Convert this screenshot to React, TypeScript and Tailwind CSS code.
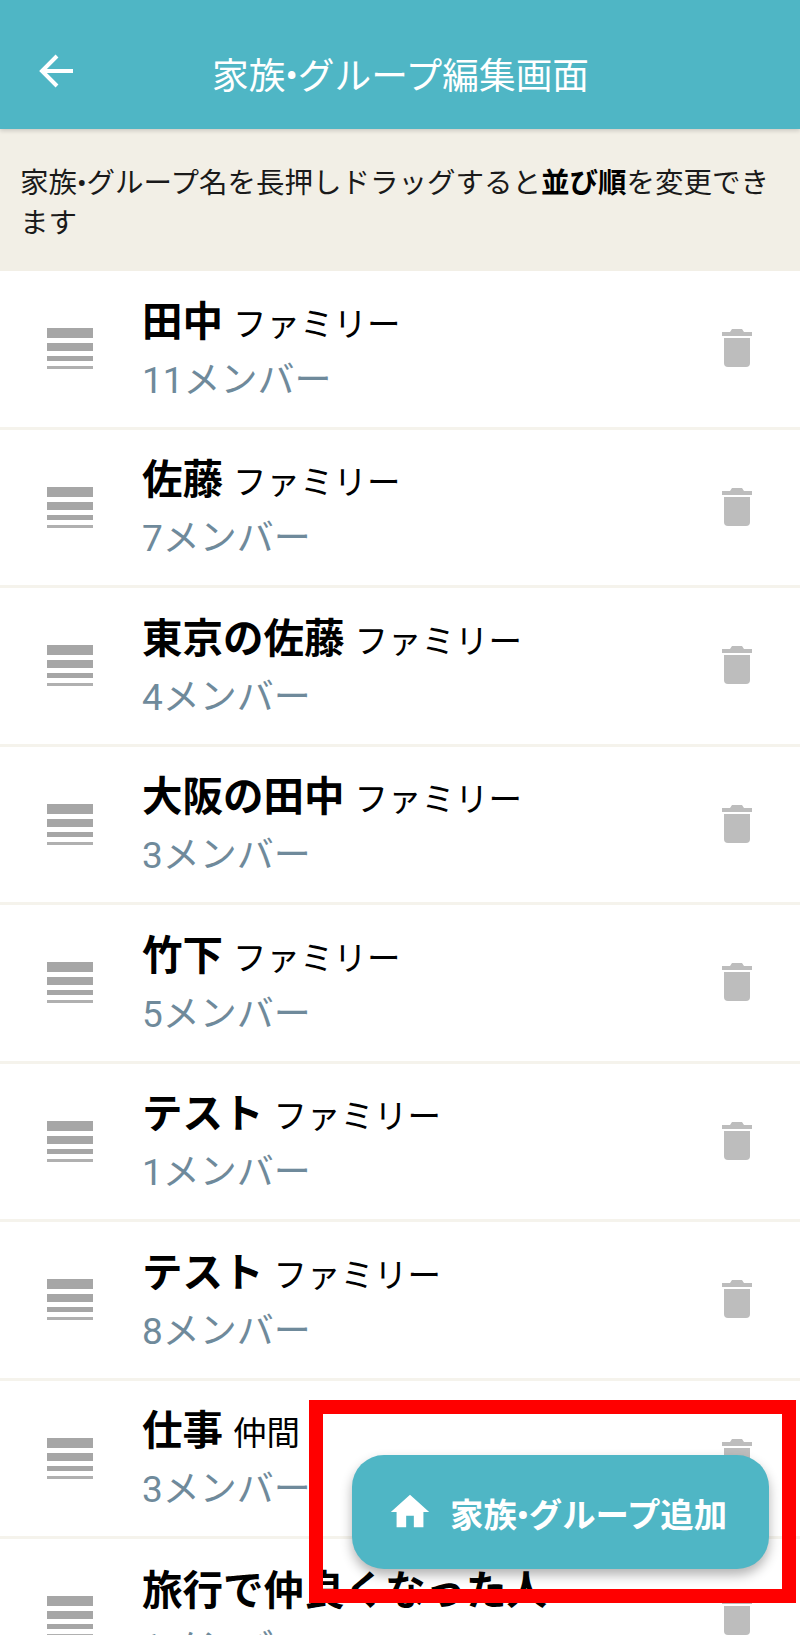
const rows = [
  { name: "田中", tag: "ファミリー", count: "11メンバー" },
  { name: "佐藤", tag: "ファミリー", count: "7メンバー" },
  { name: "東京の佐藤", tag: "ファミリー", count: "4メンバー" },
  { name: "大阪の田中", tag: "ファミリー", count: "3メンバー" },
  { name: "竹下", tag: "ファミリー", count: "5メンバー" },
  { name: "テスト", tag: "ファミリー", count: "1メンバー" },
  { name: "テスト", tag: "ファミリー", count: "8メンバー" },
  { name: "仕事", tag: "仲間", count: "3メンバー" },
  { name: "旅行で仲良くなった人", tag: "", count: "1メンバー" },
];

function Handle() {
  return (
    <div className="flex flex-col w-[46px] shrink-0 ml-[47px] mt-[0px]">
      <div className="h-[10px] bg-[#a6a6a6]" />
      <div className="h-[8px] mt-[5px] bg-[#a6a6a6]" />
      <div className="h-[5px] mt-[5px] bg-[#a6a6a6]" />
      <div className="h-[3px] mt-[5px] bg-[#b0b0b0]" />
    </div>
  );
}

function Trash() {
  return (
    <svg width="30" height="38" viewBox="0 0 30 38" className="shrink-0 mr-[48px] mt-[-1px]" fill="#bdbdbd">
      <path d="M10 0h10l2 3h8v4H0V3h8z" />
      <path d="M2 9h26v25a4 4 0 0 1-4 4H6a4 4 0 0 1-4-4z" />
    </svg>
  );
}

export default function App() {
  return (
    <div className="relative h-[1635px] w-[800px] overflow-hidden bg-white font-['Roboto','Noto_Sans_CJK_JP',sans-serif]">
      <header className="relative z-10 flex h-[129px] items-center bg-[#4fb6c5] shadow-[0_2px_4px_rgba(0,0,0,0.15)]">
        <svg width="36" height="36" viewBox="0 0 36 36" className="ml-[39px] mt-[13px] shrink-0" fill="none" stroke="#fff" strokeWidth="4">
          <path d="M34 18H4M18 3 3 18l15 15" />
        </svg>
        <h1 className="ml-[137px] mt-[26px] text-[36.7px] font-normal leading-none text-white whitespace-nowrap">家族•グループ編集画面</h1>
      </header>
      <div className="h-[142px] bg-[#f2efe6] pl-[20px] pr-[21px] pt-[35px] text-[28.5px] leading-[40px] text-[#1a1a1a]">
        家族•グループ名を長押しドラッグすると<b className="text-black">並び順</b>を変更できます
      </div>
      <ul>
        {rows.map((r, i) => (
          <li key={i} className="flex h-[158.5px] items-center border-b-[3px] border-[#f5f3ec]">
            <Handle />
            <div className="ml-[49px] flex-1 mt-[5px]">
              <div className="flex items-baseline whitespace-nowrap leading-[53px] text-black">
                <span className="text-[40.5px] font-bold">{r.name}</span>
                {r.tag && <span className="ml-[10px] text-[33.5px]">{r.tag}</span>}
              </div>
              <div className="mt-[3px] text-[37px] leading-[53px] text-[#6f8a9b]">{r.count}</div>
            </div>
            <Trash />
          </li>
        ))}
      </ul>
      <button className="absolute left-[352px] top-[1455px] flex h-[114px] w-[417px] items-center rounded-[32px] bg-[#4fb6c5] pl-[35px] text-white shadow-[0_6px_12px_rgba(0,0,0,0.3)]">
        <svg width="46" height="46" viewBox="0 0 24 24" fill="#fff" className="shrink-0">
          <path d="M10 20v-6h4v6h5v-8h3L12 3 2 12h3v8z" />
        </svg>
        <span className="ml-[17px] mt-[8px] text-[33.4px] font-bold whitespace-nowrap">家族•グループ追加</span>
      </button>
      <div className="absolute left-[309px] top-[1400px] h-[203px] w-[487px] border-[14px] border-[#ff0000]" />
    </div>
  );
}
